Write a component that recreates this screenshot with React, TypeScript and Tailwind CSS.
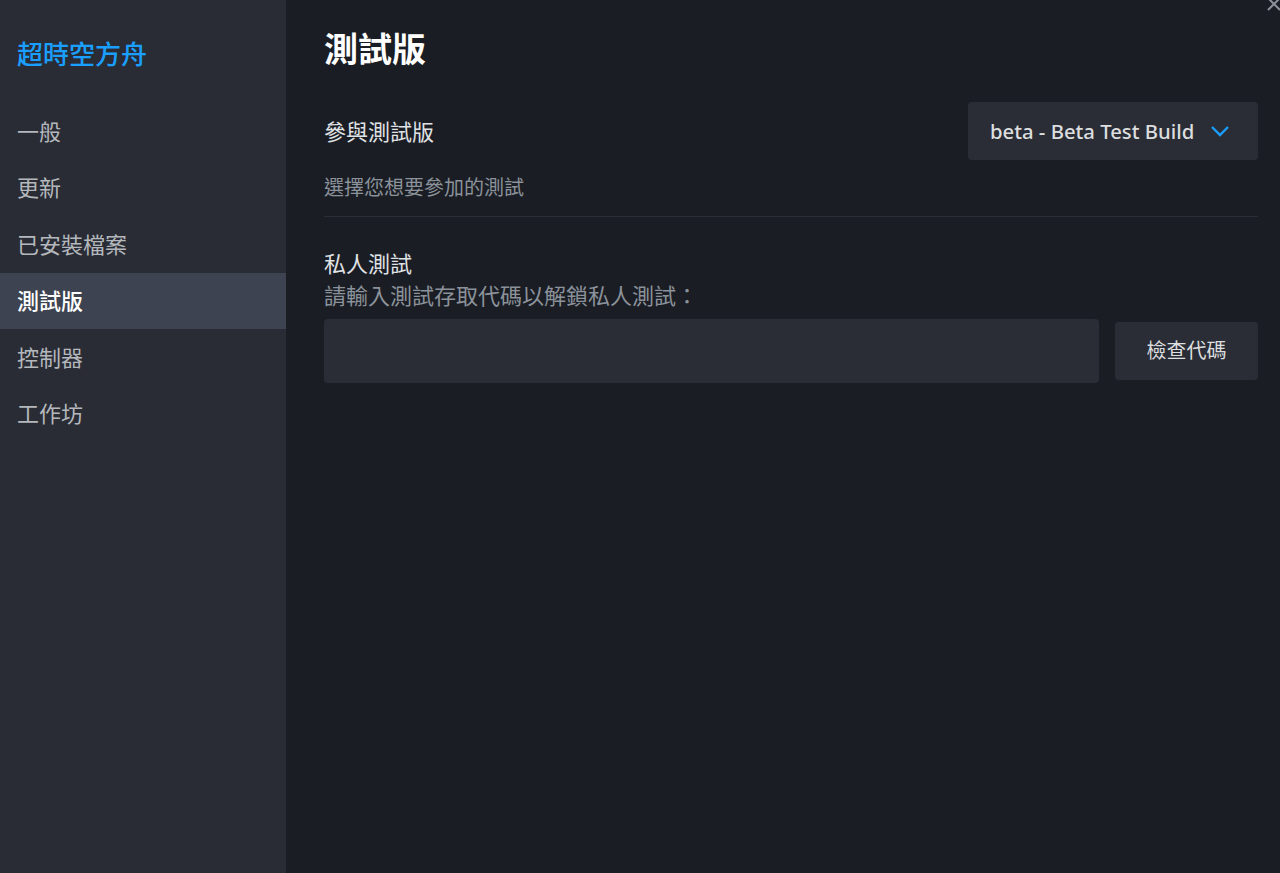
import React, { useState } from 'react';

const navItems = ['一般', '更新', '已安裝檔案', '測試版', '控制器', '工作坊'];

const font = { fontFamily: '"Noto Sans", "Noto Sans CJK TC", sans-serif' };

const App = () => {
  const [active, setActive] = useState('測試版');
  const [code, setCode] = useState('');

  return (
    <div className="flex h-[873px] w-[1280px] overflow-hidden bg-[#1a1d24] text-white" style={font}>
      <aside className="w-[286px] shrink-0 bg-[#292c34]">
        <div className="px-[17px] pt-[35px] pb-[30px] text-[26px] leading-[38px] font-medium text-[#1a9fff]">
          超時空方舟
        </div>
        <nav className="flex flex-col">
          {navItems.map((item) => (
            <button
              key={item}
              onClick={() => setActive(item)}
              className={`h-[56.5px] px-[17px] text-left text-[22px] ${
                active === item ? 'bg-[#3d4350] text-white font-medium' : 'text-[#b4b8bd]'
              }`}
            >
              {item}
            </button>
          ))}
        </nav>
      </aside>

      <main className="relative flex-1 pl-[38px] pr-[22px]">
        <button className="absolute -top-[6px] right-[-4px] text-[#8b9199]">
          <svg width="20" height="20" viewBox="0 0 20 20" fill="none" stroke="currentColor" strokeWidth="2">
            <path d="M4 4l12 12M16 4L4 16" />
          </svg>
        </button>

        <h1 className="pt-[27px] text-[34px] leading-[44px] font-bold">測試版</h1>

        <div className="mt-[31px] flex items-center justify-between">
          <div className="text-[22px] text-[#e0e3e6]">參與測試版</div>
          <button className="flex h-[58px] w-[290px] items-center rounded-[4px] bg-[#2a2d36] pl-[22px] text-[20.3px] font-medium text-[#dcdedf]">
            <span>beta - Beta Test Build</span>
            <svg className="ml-[16px]" width="20" height="12" viewBox="0 0 20 12" fill="none" stroke="#1a9fff" strokeWidth="2.4">
              <path d="M2 2l8 8 8-8" />
            </svg>
          </button>
        </div>

        <div className="mt-[14px] text-[20px] leading-[28px] text-[#8b929a]">選擇您想要參加的測試</div>
        <div className="mt-[14px] h-px bg-[#2a2e36]" />

        <div className="mt-[32px] text-[22px] leading-[28px] text-[#e0e3e6]">私人測試</div>
        <div className="mt-[4px] text-[22px] leading-[28px] text-[#8b929a]">請輸入測試存取代碼以解鎖私人測試：</div>

        <div className="mt-[10px] flex items-center gap-[16px]">
          <input
            value={code}
            onChange={(e) => setCode(e.target.value)}
            className="h-[64px] flex-1 rounded-[4px] bg-[#2a2d36] px-4 text-[20px] text-white outline-none"
          />
          <button className="h-[58px] w-[143px] rounded-[4px] bg-[#2a2d36] text-[20px] text-[#dcdedf]">
            檢查代碼
          </button>
        </div>
      </main>
    </div>
  );
};

export default App;
